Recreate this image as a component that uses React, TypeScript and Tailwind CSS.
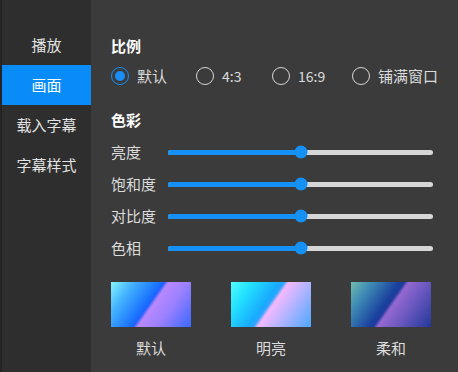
import { useState } from "react";

const font = { fontFamily: '"Noto Sans CJK SC", "Noto Sans", sans-serif' };

const menu = ["播放", "画面", "载入字幕", "字幕样式"];
const ratios = [
  { label: "默认", w: "w-[85px]" },
  { label: "4:3", w: "w-[76px]" },
  { label: "16:9", w: "w-[80px]" },
  { label: "铺满窗口", w: "" },
];
const sliders = ["亮度", "饱和度", "对比度", "色相"];

const presets = [
  {
    label: "默认",
    bg: "bg-[linear-gradient(125deg,#86f4ff_0%,#45b4ff_20%,#1a72ff_44%,#1f62ff_48%,#b888ff_52%,#9a80ff_70%,#3a68ff_100%)]",
  },
  {
    label: "明亮",
    bg: "bg-[linear-gradient(125deg,#50fdff_0%,#22e0ff_20%,#18aaff_44%,#30a4ff_48%,#f4b8ff_52%,#b4b4ff_70%,#4ca8ff_100%)]",
  },
  {
    label: "柔和",
    bg: "bg-[linear-gradient(125deg,#70bcb0_0%,#3c88b4_20%,#1a409e_44%,#1e3c9c_48%,#9468d0_52%,#6a58c0_70%,#22389a_100%)]",
  },
];

export default function App() {
  const [active, setActive] = useState(1);
  const [ratio, setRatio] = useState(0);

  return (
    <div className="w-[458px] h-[372px] flex bg-[#3b3b3b] overflow-hidden" style={font}>
      <div className="w-[91px] shrink-0 h-full bg-[#2e2e2e] border-l-2 border-[#242424] pt-[25px] flex flex-col">
        {menu.map((m, i) => (
          <div
            key={m}
            onClick={() => setActive(i)}
            className={
              "h-10 flex items-center justify-center text-[15px] " +
              (i === active ? "bg-[#0a8cf8] text-white" : "text-[#e2e2e2]")
            }
          >
            {m}
          </div>
        ))}
      </div>

      <div className="flex-1 min-w-0 pl-5 pr-[25px] pt-9 text-[15px] text-[#dcdcdc]">
        <div className="h-5 leading-5 font-bold text-white">比例</div>

        <div className="mt-[10px] h-5 flex items-center">
          {ratios.map((r, i) => (
            <div
              key={r.label}
              className={"flex items-center gap-[8px] whitespace-nowrap shrink-0 " + r.w}
              onClick={() => setRatio(i)}
            >
              <span
                className={
                  "w-[18px] h-[18px] shrink-0 rounded-full border-[1.5px] flex items-center justify-center " +
                  (i === ratio ? "border-[#1a8ef5]" : "border-[#d8d8d8]")
                }
              >
                {i === ratio && <span className="w-[10px] h-[10px] rounded-full bg-[#1a8ef5]" />}
              </span>
              <span className={i === 1 || i === 2 ? "text-[14px]" : ""}>{r.label}</span>
            </div>
          ))}
        </div>

        <div className="mt-6 h-5 leading-5 font-bold text-white">色彩</div>

        <div className="mt-[6px] flex flex-col">
          {sliders.map((s) => (
            <div key={s} className="h-8 flex items-center">
              <span className="w-[57px]">{s}</span>
              <div className="relative flex-1 h-[5px] rounded-full bg-[#d6d6d6]">
                <div className="h-full w-1/2 rounded-l-full bg-[#1590f5]" />
                <div className="absolute left-1/2 top-1/2 -translate-x-1/2 -translate-y-1/2 w-[13px] h-[13px] rounded-full bg-[#1590f5]" />
              </div>
            </div>
          ))}
        </div>

        <div className="mt-[18px] flex gap-10">
          {presets.map((p) => (
            <div key={p.label} className="w-20 flex flex-col items-center">
              <div className={"w-20 h-[45px] " + p.bg} />
              <div className="mt-[11px] h-5 leading-5">{p.label}</div>
            </div>
          ))}
        </div>
      </div>
    </div>
  );
}
